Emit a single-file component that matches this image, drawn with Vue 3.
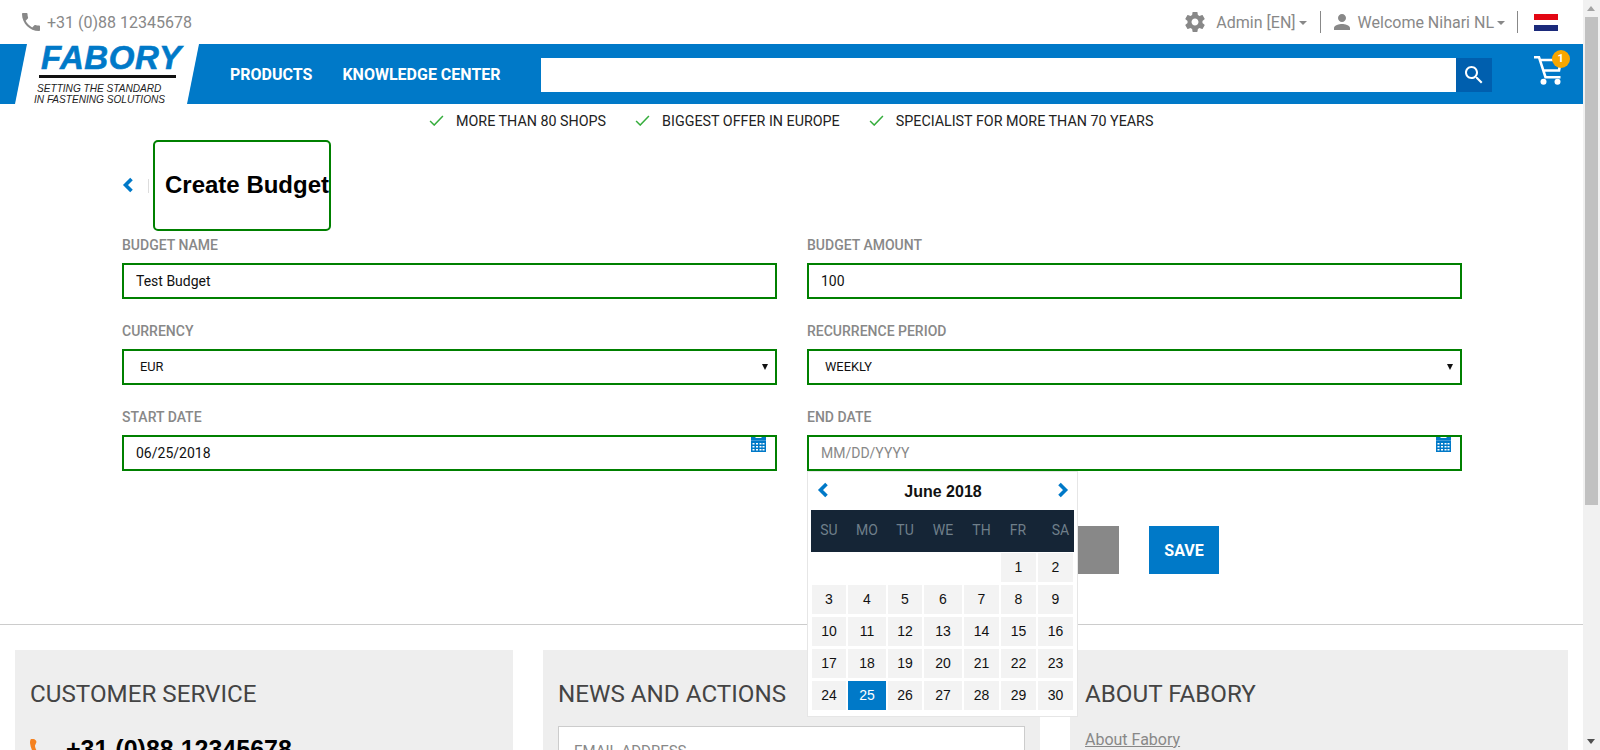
<template>
  <div class="screen">
    <div class="page">
      <!-- top bar -->
      <div class="topbar">
        <div class="top-phone">
          <svg class="ico-phone" viewBox="0 0 24 24"><path d="M6.62 10.79c1.44 2.83 3.76 5.14 6.59 6.59l2.2-2.2c.27-.27.67-.36 1.02-.24 1.12.37 2.33.57 3.57.57.55 0 1 .45 1 1V20c0 .55-.45 1-1 1-9.39 0-17-7.61-17-17 0-.55.45-1 1-1h3.5c.55 0 1 .45 1 1 0 1.25.2 2.45.57 3.57.11.35.03.74-.25 1.02l-2.2 2.2z" /></svg>
          <span>+31 (0)88 12345678</span>
        </div>
        <div class="top-right">
          <svg class="ico-gear" viewBox="0 0 24 24"><path d="M19.43 12.98c.04-.32.07-.64.07-.98s-.03-.66-.07-.98l2.11-1.65c.19-.15.24-.42.12-.64l-2-3.46c-.12-.22-.39-.3-.61-.22l-2.49 1c-.52-.4-1.08-.73-1.69-.98l-.38-2.65C14.46 2.18 14.25 2 14 2h-4c-.25 0-.46.18-.49.42l-.38 2.65c-.61.25-1.17.59-1.69.98l-2.49-1c-.23-.09-.49 0-.61.22l-2 3.46c-.13.22-.07.49.12.64l2.11 1.65c-.04.32-.07.65-.07.98s.03.66.07.98l-2.11 1.65c-.19.15-.24.42-.12.64l2 3.46c.12.22.39.3.61.22l2.49-1c.52.4 1.08.73 1.69.98l.38 2.65c.03.24.24.42.49.42h4c.25 0 .46-.18.49-.42l.38-2.65c.61-.25 1.17-.59 1.69-.98l2.49 1c.23.09.49 0 .61-.22l2-3.46c.12-.22.07-.49-.12-.64l-2.11-1.65zM12 15.5c-1.93 0-3.5-1.57-3.5-3.5s1.57-3.5 3.5-3.5 3.5 1.57 3.5 3.5-1.57 3.5-3.5 3.5z" /></svg>
          <span class="top-link">Admin [EN]<i class="caret"></i></span>
          <span class="top-sep"></span>
          <svg class="ico-person" viewBox="0 0 24 24"><path d="M12 12c2.21 0 4-1.79 4-4s-1.79-4-4-4-4 1.79-4 4 1.79 4 4 4zm0 2c-2.67 0-8 1.34-8 4v2h16v-2c0-2.66-5.33-4-8-4z" /></svg>
          <span class="top-link">Welcome Nihari NL<i class="caret"></i></span>
          <span class="top-sep sep-last"></span>
          <span class="flag"><i class="red"></i><i class="white"></i><i class="navy"></i></span>
        </div>
      </div>

      <!-- nav -->
      <div class="navbar">
        <div class="logo">
          <div class="logo-name">FABORY</div>
          <div class="logo-rule"></div>
          <div class="logo-tag">SETTING THE STANDARD</div>
          <div class="logo-tag second">IN FASTENING SOLUTIONS</div>
        </div>
        <a class="nav-link first">PRODUCTS</a>
        <a class="nav-link">KNOWLEDGE CENTER</a>
        <div class="search">
          <div class="search-field"></div>
          <div class="search-btn">
            <svg viewBox="0 0 24 24"><path d="M15.5 14h-.79l-.28-.27C15.41 12.59 16 11.11 16 9.5 16 5.91 13.09 3 9.5 3S3 5.91 3 9.5 5.91 16 9.5 16c1.61 0 3.09-.59 4.23-1.57l.27.28v.79l5 4.99L20.49 19l-4.99-5zm-6 0C7.01 14 5 11.99 5 9.5S7.01 5 9.5 5 14 7.01 14 9.5 11.99 14 9.5 14z" /></svg>
          </div>
        </div>
        <div class="cart">
          <svg viewBox="0 0 28 30">
            <path class="cart-line" d="M0 2.200h5l6.500 20h15M6 5h21l-2 10.500H9.500" />
            <circle cx="9.500" cy="26.700" r="3" />
            <circle cx="23.500" cy="26.700" r="3" />
          </svg>
          <span class="badge">1</span>
        </div>
      </div>

      <!-- usp -->
      <div class="usps">
        <div v-for="usp in usps" :key="usp" class="usp">
          <svg viewBox="0 0 16 12"><path d="M1 6.500 5.500 11 15 1" /></svg>
          <span>{{ usp }}</span>
        </div>
      </div>

      <!-- form -->
      <div class="content">
        <div class="title-row">
          <svg class="back" viewBox="0 0 12 16"><path d="M9.500 2 3.500 8l6 6" /></svg>
          <span class="title-sep"></span>
          <h1 class="title">Create Budget</h1>
        </div>

        <div class="form-grid">
          <div class="field">
            <label>BUDGET NAME</label>
            <input class="control" type="text" value="Test Budget" />
          </div>
          <div class="field">
            <label>BUDGET AMOUNT</label>
            <input class="control" type="text" value="100" />
          </div>
          <div class="field">
            <label>CURRENCY</label>
            <div class="control select">EUR<i class="sel-arrow"></i></div>
          </div>
          <div class="field">
            <label>RECURRENCE PERIOD</label>
            <div class="control select">WEEKLY<i class="sel-arrow"></i></div>
          </div>
          <div class="field">
            <label>START DATE</label>
            <div class="date-wrap">
              <input class="control" type="text" value="06/25/2018" />
              <svg class="cal-ico" viewBox="0 0 15 16"><path d="M0 1h4l1 1h5l1-1h4v3.500H0z" /><path fill-rule="evenodd" d="M0 4.500h15V16H0zM1.500 7v1.500h2V7zm3.500 0v1.500h2V7zm3.500 0v1.500h2V7zm3 0v1.500h2V7zM1.500 10v1.500h2V10zm3.500 0v1.500h2V10zm3.500 0v1.500h2V10zm3 0v1.500h2V10zM1.500 13v1.500h2V13zm3.500 0v1.500h2V13zm3.500 0v1.500h2V13zm3 0v1.500h2V13z" /></svg>
            </div>
          </div>
          <div class="field">
            <label>END DATE</label>
            <div class="date-wrap">
              <input class="control" type="text" placeholder="MM/DD/YYYY" />
              <svg class="cal-ico" viewBox="0 0 15 16"><path d="M0 1h4l1 1h5l1-1h4v3.500H0z" /><path fill-rule="evenodd" d="M0 4.500h15V16H0zM1.500 7v1.500h2V7zm3.500 0v1.500h2V7zm3.500 0v1.500h2V7zm3 0v1.500h2V7zM1.500 10v1.500h2V10zm3.500 0v1.500h2V10zm3.500 0v1.500h2V10zm3 0v1.500h2V10zM1.500 13v1.500h2V13zm3.500 0v1.500h2V13zm3.500 0v1.500h2V13zm3 0v1.500h2V13z" /></svg>

              <!-- datepicker -->
              <div class="picker">
                <div class="picker-head">
                  <svg viewBox="0 0 12 16"><path d="M9.500 2 3.500 8l6 6" /></svg>
                  <span>June 2018</span>
                  <svg viewBox="0 0 12 16"><path d="M2.500 2l6 6-6 6" /></svg>
                </div>
                <div class="picker-dow">
                  <span v-for="d in dow" :key="d">{{ d }}</span>
                </div>
                <div class="picker-days">
                  <span v-for="n in 5" :key="'e' + n"></span>
                  <span v-for="n in 30" :key="n" class="day" :class="{ active: n === 25 }">{{ n }}</span>
                </div>
              </div>
            </div>
          </div>
        </div>

        <div class="actions">
          <button class="btn btn-grey"></button>
          <button class="btn btn-save">SAVE</button>
        </div>
      </div>

      <!-- footer -->
      <div class="footer">
        <div class="card">
          <h2>CUSTOMER SERVICE</h2>
          <div class="card-phone">
            <svg viewBox="0 0 22 30"><path d="M1 0c2.500-.5 5 .5 5.500 3L5 6.500c0 2 .8 3.500 2 5.500l3 4 3.500-.5 5 6c-1 2.500-3.500 4-6 4C8 24 1 12 0 4 0 2 .2 1 1 0z" /></svg>
            <span>+31 (0)88 12345678</span>
          </div>
        </div>
        <div class="card">
          <h2>NEWS AND ACTIONS</h2>
          <div class="email">EMAIL ADDRESS</div>
        </div>
        <div class="card">
          <h2>ABOUT FABORY</h2>
          <a class="about">About Fabory</a>
        </div>
      </div>
    </div>

    <!-- scrollbar -->
    <div class="scrollbar">
      <i class="arrow-up"></i>
      <div class="thumb"></div>
      <i class="arrow-down"></i>
    </div>
  </div>
</template>

<script setup>
const usps = ['MORE THAN 80 SHOPS', 'BIGGEST OFFER IN EUROPE', 'SPECIALIST FOR MORE THAN 70 YEARS']
const dow = ['SU', 'MO', 'TU', 'WE', 'TH', 'FR', 'SA']
</script>

<style>
html,
body {
  margin: 0;
  overflow: hidden;
  background: #fff;
}
</style>

<style scoped>
.screen {
  display: flex;
  width: 1600px;
  height: 750px;
  overflow: hidden;
  font-family: Roboto, "Liberation Sans", sans-serif;
}

.page {
  width: 1583px;
  flex: none;
}

/* top bar */
.topbar {
  height: 44px;
  display: flex;
  align-items: center;
  justify-content: space-between;
  padding: 0 25px 0 19px;
  color: #888;
  font-size: 16px;
}

.top-phone,
.top-right {
  display: flex;
  align-items: center;
}

.ico-phone {
  width: 24px;
  height: 24px;
  fill: #888;
  margin-right: 4px;
}

.ico-gear {
  width: 24px;
  height: 24px;
  fill: #888;
  margin-right: 9px;
}

.ico-person {
  width: 24px;
  height: 24px;
  fill: #888;
  margin-right: 4px;
}

.top-link {
  white-space: nowrap;
}

.caret {
  display: inline-block;
  margin-left: 3px;
  vertical-align: middle;
  border-top: 4px solid #888;
  border-left: 4px solid transparent;
  border-right: 4px solid transparent;
}

.top-sep {
  width: 1px;
  height: 22px;
  background: #888;
  margin: 0 9px 0 13px;
}

.sep-last {
  margin: 0 16px 0 12px;
}

.flag {
  width: 24px;
  display: flex;
  flex-direction: column;
}

.flag i {
  display: block;
  height: 6px;
}

.flag .red {
  background: #e30613;
}

.flag .white {
  background: #fff;
  height: 5px;
}

.flag .navy {
  background: #1b2a7b;
}

/* nav */
.navbar {
  height: 60px;
  background: #0079c8;
  display: flex;
  align-items: center;
}

.logo {
  width: 184px;
  height: 60px;
  margin-left: 15px;
  flex: none;
  background: #fff;
  clip-path: polygon(12px 0, 100% 0, 172px 100%, 0 100%);
  font-family: "Liberation Sans", Arial, sans-serif;
  font-style: italic;
}

.logo-name {
  font-size: 33px;
  line-height: 28px;
  margin-left: 26px;
  font-weight: 700;
  color: #0079c8;
  letter-spacing: 0.6px;
  -webkit-text-stroke: 0.6px #0079c8;
}

.logo-rule {
  width: 137px;
  height: 3px;
  background: #111;
  margin: 3px 0 5px 24px;
}

.logo-tag {
  font-size: 10.1px;
  line-height: 11px;
  color: #222;
  margin-left: 22px;
  white-space: nowrap;
}

.logo-tag.second {
  margin-left: 19px;
}

.nav-link {
  color: #fff;
  font-size: 16px;
  font-weight: 700;
  margin-left: 30px;
  white-space: nowrap;
}

.nav-link.first {
  margin-left: 31px;
}

.search {
  display: flex;
  margin: 2px 0 0 40px;
  width: 951px;
  height: 34px;
}

.search-field {
  flex: 1;
  background: #fff;
}

.search-btn {
  width: 36px;
  background: #005fae;
  display: flex;
  align-items: center;
  justify-content: center;
}

.search-btn svg {
  width: 24px;
  height: 24px;
  fill: #fff;
}

.cart {
  position: relative;
  margin: 0 0 8px 42px;
  width: 28px;
  height: 30px;
}

.cart svg {
  display: block;
  width: 28px;
  height: 30px;
  fill: #fff;
}

.cart .cart-line {
  fill: none;
  stroke: #fff;
  stroke-width: 2.6;
}

.badge {
  position: absolute;
  top: -5px;
  left: 18px;
  width: 18px;
  height: 18px;
  border-radius: 50%;
  background: #f7a600;
  color: #fff;
  font-size: 11px;
  font-weight: 700;
  line-height: 18px;
  text-align: center;
}

/* usp */
.usps {
  height: 33px;
  display: flex;
  align-items: center;
  padding-left: 429px;
  gap: 29px;
  font-size: 14.3px;
  color: #222;
}

.usp {
  display: flex;
  align-items: center;
  gap: 12px;
}

.usp svg {
  width: 15px;
  height: 11px;
  fill: none;
  stroke: #35ad3c;
  stroke-width: 1.6;
}

/* form */
.content {
  padding: 3px 0 0 122px;
}

.title-row {
  display: flex;
  align-items: center;
  height: 91px;
}

.back {
  width: 12px;
  height: 16px;
  margin-bottom: 1px;
  fill: none;
  stroke: #0079c8;
  stroke-width: 3.6;
}

.title-sep {
  width: 1px;
  height: 14px;
  background: #ddd;
  margin: 0 4px 0 14px;
}

.title {
  margin: 0;
  width: 178px;
  height: 91px;
  box-sizing: border-box;
  border: 2px solid green;
  border-radius: 5px;
  padding-left: 10px;
  font-family: "Liberation Sans", Arial, sans-serif;
  font-size: 24px;
  font-weight: 700;
  line-height: 85px;
  color: #000;
  white-space: nowrap;
}

.form-grid {
  display: grid;
  grid-template-columns: 655px 655px;
  column-gap: 30px;
  row-gap: 22px;
  margin-top: 4px;
}

.field label {
  display: block;
  height: 28px;
  line-height: 20px;
  font-size: 14px;
  font-weight: 500;
  color: #888;
}

.control {
  display: block;
  width: 100%;
  height: 36px;
  box-sizing: border-box;
  border: 2px solid green;
  border-radius: 0;
  padding: 0 12px;
  outline: none;
  background: #fff;
  color: #111;
  font-family: Roboto, "Liberation Sans", sans-serif;
  font-size: 14px;
}

.control::placeholder {
  color: #888;
}

.select {
  position: relative;
  padding-left: 16px;
  line-height: 32px;
  font-size: 12.8px;
}

.sel-arrow {
  position: absolute;
  right: 7px;
  top: 13px;
  border-top: 6px solid #111;
  border-left: 3px solid transparent;
  border-right: 3px solid transparent;
}

.date-wrap {
  position: relative;
}

.cal-ico {
  position: absolute;
  right: 11px;
  top: 1px;
  width: 15px;
  height: 16px;
  fill: #0079c8;
}

.picker {
  position: absolute;
  top: 36px;
  left: 0;
  width: 271px;
  height: 246px;
  box-sizing: border-box;
  padding: 0 3px;
  background: #fff;
  border: 1px solid #e6e6e6;
  z-index: 2;
}

.picker-head {
  height: 38px;
  display: flex;
  align-items: center;
  justify-content: space-between;
  padding: 0 5px 0 6px;
  font-family: "Liberation Sans", Arial, sans-serif;
  font-size: 16px;
  font-weight: 700;
  color: #111;
}

.picker-head span {
  padding-top: 2px;
}

.picker-head svg {
  width: 12px;
  height: 16px;
  margin-bottom: 3px;
  fill: none;
  stroke: #0079c8;
  stroke-width: 3.6;
}

.picker-dow {
  display: grid;
  grid-template-columns: 36px 40px 36px 40px 37px 36px 38px;
  width: 263px;
  height: 42px;
  align-items: center;
  background: #152536;
  color: #6f7f8a;
  font-size: 14px;
  text-align: center;
}

.picker-dow span {
  margin-top: -2px;
}

.picker-dow span:last-child {
  padding-left: 11px;
}

.picker-days {
  display: grid;
  grid-template-columns: 34px 38px 34px 38px 35px 35px 35px;
  grid-auto-rows: 29px;
  column-gap: 2px;
  row-gap: 3px;
  margin: 1px 0 0 1px;
  font-family: "Liberation Sans", Arial, sans-serif;
  font-size: 14px;
}

.day {
  background: #f3f3f3;
  color: #111;
  text-align: center;
  line-height: 29px;
}

.day.active {
  background: #0079c8;
  color: #fff;
}

.actions {
  display: flex;
  justify-content: flex-end;
  gap: 30px;
  width: 1097px;
  margin-top: 55px;
}

.btn {
  height: 48px;
  border: none;
  padding: 0;
  font-family: Roboto, "Liberation Sans", sans-serif;
  font-size: 16px;
  font-weight: 700;
  color: #fff;
}

.btn-grey {
  width: 100px;
  background: #888;
}

.btn-save {
  width: 70px;
  background: #0079c8;
}

/* footer */
.footer {
  margin-top: 50px;
  border-top: 1px solid #ccc;
  padding: 25px 15px 0;
  display: grid;
  grid-template-columns: 498px 497px 498px;
  column-gap: 30px;
}

.card {
  background: #eee;
  height: 200px;
  padding: 28px 15px 0;
  box-sizing: border-box;
}

.card h2 {
  margin: 0;
  font-size: 24.2px;
  font-weight: 400;
  line-height: 32px;
  color: #444;
}

.card-phone {
  display: flex;
  gap: 14px;
  margin-top: 24px;
  font-family: "Liberation Sans", Arial, sans-serif;
  font-size: 25px;
  font-weight: 700;
  line-height: 30px;
  color: #000;
}

.card-phone svg {
  width: 22px;
  height: 30px;
  margin-top: 5px;
  fill: #f58220;
}

.email {
  margin-top: 16px;
  height: 60px;
  box-sizing: border-box;
  border: 1px solid #ccc;
  background: #fff;
  padding: 15px;
  font-size: 15px;
  color: #888;
}

.about {
  display: block;
  margin-top: 20px;
  font-size: 16px;
  color: #888;
  text-decoration: underline;
}

/* scrollbar */
.scrollbar {
  position: relative;
  width: 17px;
  background: #f1f1f1;
  flex: none;
}

.thumb {
  position: absolute;
  left: 2px;
  top: 17px;
  width: 13px;
  height: 488px;
  background: #c1c1c1;
}

.arrow-up {
  position: absolute;
  left: 4px;
  top: 6px;
  border-bottom: 5px solid #a3a3a3;
  border-left: 4px solid transparent;
  border-right: 4px solid transparent;
}

.arrow-down {
  position: absolute;
  left: 4px;
  bottom: 6px;
  border-top: 5px solid #505050;
  border-left: 4px solid transparent;
  border-right: 4px solid transparent;
}
</style>
